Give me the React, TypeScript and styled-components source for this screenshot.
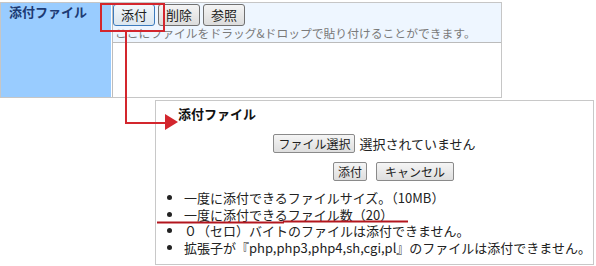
import styled, { createGlobalStyle } from "styled-components";

const GlobalStyle = createGlobalStyle`
  html, body {
    margin: 0;
    padding: 0;
    background: #ffffff;
  }
  body {
    font-family: "Noto Sans CJK JP", "Noto Sans", sans-serif;
    color: #222222;
  }
`;

const notes = [
  "一度に添付できるファイルサイズ。（10MB）",
  "一度に添付できるファイル数（20）",
  "０（セロ）バイトのファイルは添付できません。",
  "拡張子が『php,php3,php4,sh,cgi,pl』のファイルは添付できません。",
];

const App = () => {
  return (
    <>
      <GlobalStyle />
      <Page>
        <FormTable>
          <LabelCell>添付ファイル</LabelCell>
          <ValueCell>
            <ToolBar>
              <ToolButton $focused>添付</ToolButton>
              <ToolButton>削除</ToolButton>
              <ToolButton>参照</ToolButton>
            </ToolBar>
            <Hint>ここにファイルをドラッグ&amp;ドロップで貼り付けることができます。</Hint>
            <DropArea />
          </ValueCell>
        </FormTable>

        <Dialog>
          <DialogTitle>添付ファイル</DialogTitle>
          <FileRow>
            <SmallButton $pad={4}>ファイル選択</SmallButton>
            <FileStatus>選択されていません</FileStatus>
          </FileRow>
          <ActionRow>
            <SmallButton $pad={4}>添付</SmallButton>
            <SmallButton $pad={8}>キャンセル</SmallButton>
          </ActionRow>
          <NoteList>
            {notes.map((note) => (
              <li key={note}>{note}</li>
            ))}
          </NoteList>
        </Dialog>

        <Annotation viewBox="0 0 596 266">
          <rect x="101" y="4" width="63" height="27" fill="none" stroke="#d3262d" strokeWidth="2" />
          <polyline points="126,32 126,123 166,123" fill="none" stroke="#d3262d" strokeWidth="2" />
          <polygon points="165,114 178,122 165,130" fill="#d3262d" />
          <line x1="157" y1="222.5" x2="284" y2="222.5" stroke="#b3161e" strokeWidth="2" />
          <line x1="283" y1="221.5" x2="408" y2="221.5" stroke="#b3161e" strokeWidth="2" />
        </Annotation>
      </Page>
    </>
  );
};

const Page = styled.div`
  position: relative;
  width: 596px;
  height: 266px;
  padding-top: 2px;
  box-sizing: border-box;
  overflow: hidden;
`;

const FormTable = styled.div`
  display: flex;
  gap: 1px;
  width: 502px;
  height: 96px;
  box-sizing: border-box;
  border: 1px solid #c6c6c6;
  background: #ffffff;
`;

const LabelCell = styled.div`
  width: 110px;
  padding: 0 0 0 8px;
  box-sizing: border-box;

  background: #99ccff;
  font-size: 13px;
  font-weight: 700;
  line-height: 18px;
  color: #1d3b74;
`;

const ValueCell = styled.div`
  flex: 1;
  display: flex;
  flex-direction: column;

  border-left: 1px solid #bdbdbd;
  background: #eef6ff;
`;

const ToolBar = styled.div`
  display: flex;
  gap: 3px;
  padding-top: 1px;
`;

const ToolButton = styled.button<{ $focused?: boolean }>`
  height: 22px;
  padding: 0 7px;
  margin: 0;

  font-family: inherit;
  font-size: 13px;
  line-height: 20px;
  color: #222222;

  border: 1px solid ${({ $focused }) => ($focused ? "#3d7bbd" : "#707070")};
  border-radius: 3px;
  background: ${({ $focused }) =>
    $focused
      ? "linear-gradient(#f2f7fb, #dbe6ef)"
      : "linear-gradient(#f4f4f4, #dcdcdc)"};
`;

const Hint = styled.div`
  padding-left: 2px;
  font-size: 11.8px;
  line-height: 14px;
  color: #7a7a7a;
  white-space: nowrap;
`;

const DropArea = styled.div`
  flex: 1;
  margin-top: 2px;
  border-top: 1px solid #bbbbbb;
  background: #ffffff;
`;

const Dialog = styled.div`
  width: 439px;
  height: 165px;
  margin: 2px 0 0 155px;
  box-sizing: border-box;

  border: 1px solid #c8c8c8;
  background: #ffffff;
`;

const DialogTitle = styled.h3`
  margin: 5px 0 0 22px;
  font-size: 13px;
  font-weight: 700;
  line-height: 16px;
  color: #111111;
`;

const FileRow = styled.div`
  display: flex;
  align-items: center;
  justify-content: center;
  gap: 4px;
  margin-top: 12px;
`;

const ActionRow = styled.div`
  display: flex;
  justify-content: center;
  gap: 9px;
  margin-top: 9px;
  padding-left: 38px;
`;

const SmallButton = styled.button<{ $pad: number }>`
  height: 19px;
  padding: 0 ${({ $pad }) => $pad}px;
  margin: 0;

  font-family: inherit;
  font-size: 12px;
  line-height: 17px;
  color: #222222;

  border: 1px solid #8a8a8a;
  border-radius: 2px;
  background: linear-gradient(#f5f5f5, #dedede);
`;

const FileStatus = styled.span`
  font-size: 13px;
  line-height: 18px;
  color: #222222;
`;

const NoteList = styled.ul`
  margin: 9px 0 0;
  padding-left: 28px;

  font-size: 13px;
  line-height: 16.5px;
  color: #222222;

  li {
    white-space: nowrap;
  }
`;

const Annotation = styled.svg`
  position: absolute;
  left: 0;
  top: 0;
  width: 596px;
  height: 266px;
  pointer-events: none;
`;

export default App;
